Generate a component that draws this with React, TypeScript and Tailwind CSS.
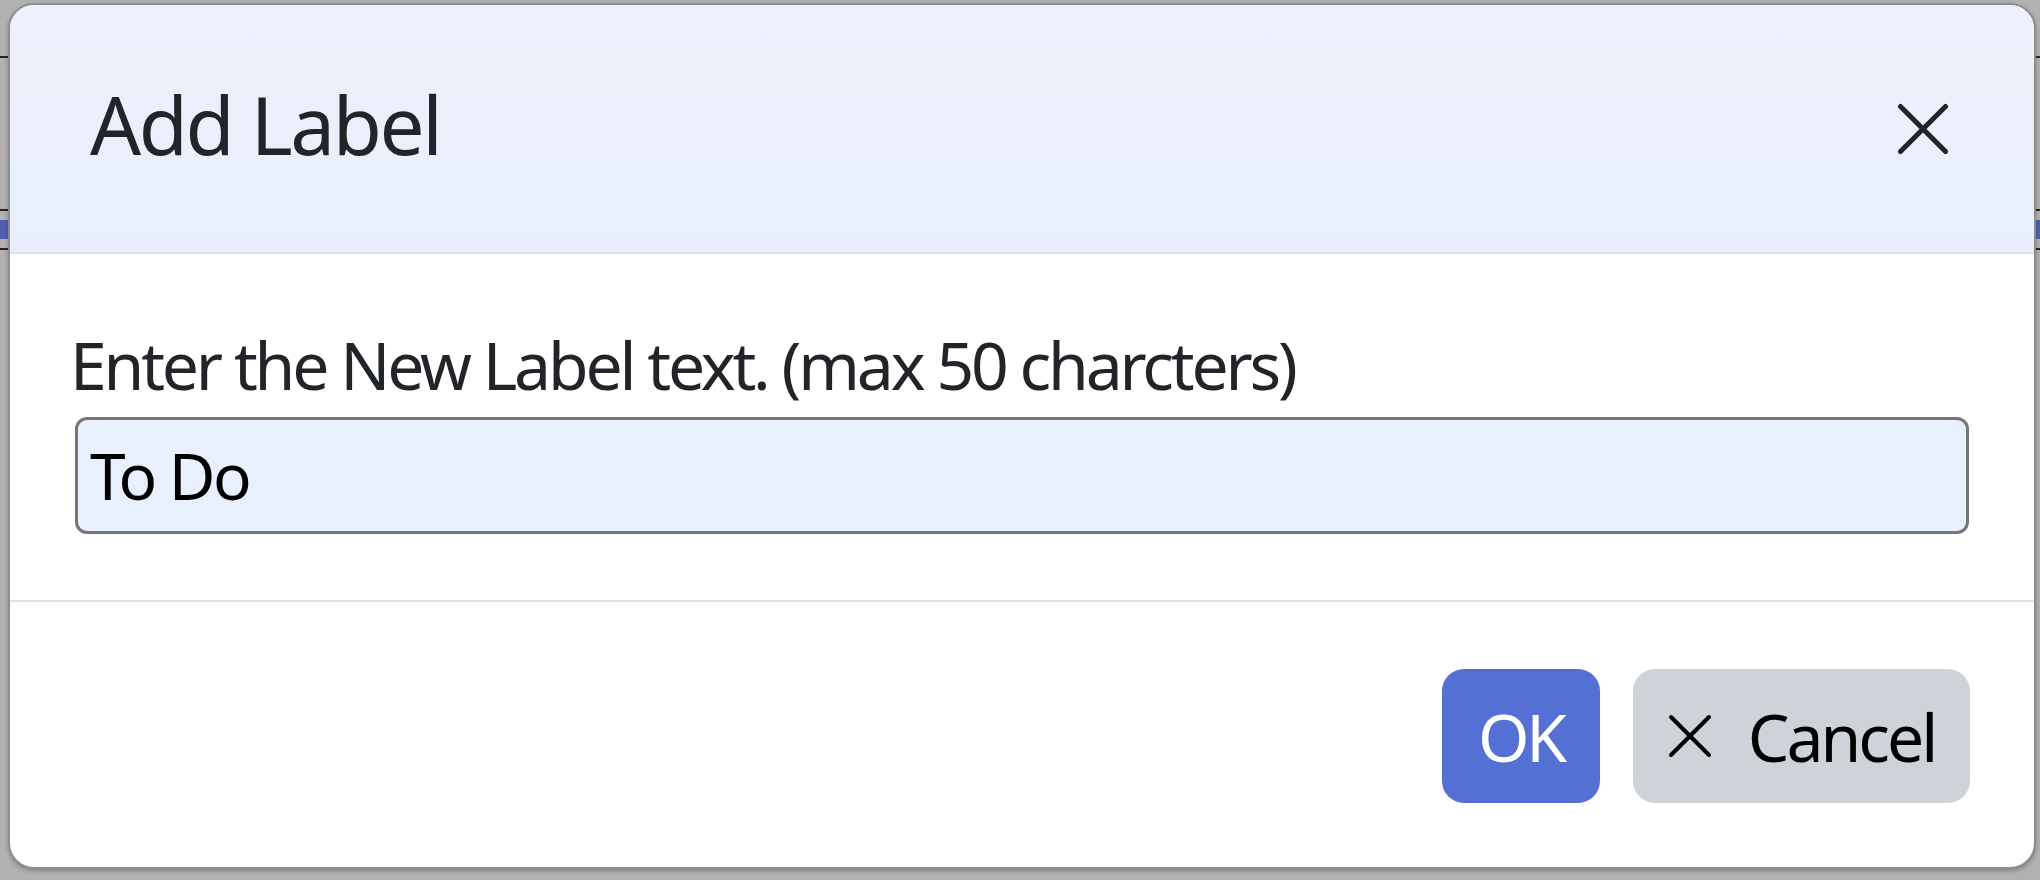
import React from "react";

const font = { fontFamily: '"Noto Sans", "Open Sans", sans-serif' };

const CloseIcon = ({ size, stroke }: { size: number; stroke: number }) => (
  <svg width={size} height={size} viewBox={`0 0 ${size} ${size}`} fill="none">
    <path
      d={`M${stroke / 2 + 1} ${stroke / 2 + 1}L${size - stroke / 2 - 1} ${size - stroke / 2 - 1}M${size - stroke / 2 - 1} ${stroke / 2 + 1}L${stroke / 2 + 1} ${size - stroke / 2 - 1}`}
      stroke="currentColor"
      strokeWidth={stroke}
      strokeLinecap="round"
    />
  </svg>
);

// page behind the modal, only the edges show
const Backdrop = () => (
  <div className="flex flex-col">
    <div className="h-[56px]" />
    <div className="h-[2px] bg-[#262626]" />
    <div className="h-[151px]" />
    <div className="h-[2px] bg-[#262626]" />
    <div className="h-[9px]" />
    <div className="h-[19px] bg-[#4f5fae]" />
    <div className="h-[9px]" />
    <div className="h-[2px] bg-[#262626]" />
  </div>
);

const AddLabelDialog = () => {
  return (
    <div className="absolute left-[8px] top-[3px] w-[2028px] h-[866px] rounded-[26px] border-2 border-[#8d8d8d] bg-white overflow-hidden shadow-[0_2px_4px_rgba(0,0,0,0.25)]">
      <div className="h-[247px] flex items-center justify-between pl-[80px] pr-[85px] bg-gradient-to-b from-[#edf1fc] to-[#e8eefb] border-b-2 border-[#dee2e6] box-content">
        <h5 className="text-[80px] leading-[120px] tracking-[-0.03em] text-[#212529] -mt-[10px]">Add Label</h5>
        <button className="text-[#212529]">
          <CloseIcon size={52} stroke={5} />
        </button>
      </div>

      <div className="pt-[61px] pb-[66px] px-[65px]">
        <label className="block text-[66px] leading-[99px] tracking-[-0.048em] text-[#212529] -ml-[5px]">
          Enter the New Label text. (max 50 charcters)
        </label>
        <div className="mt-[3px] h-[117px] flex items-center rounded-[12px] border-[3px] border-[#767676] bg-[#e8f0fe] pl-[12px]">
          <span className="text-[64px] tracking-[-0.04em] text-black">To Do</span>
        </div>
      </div>

      <div className="border-t-2 border-[#dee2e6] pt-[67px] pr-[64px] flex justify-end gap-[33px]">
        <button className="w-[158px] h-[134px] flex items-center justify-center rounded-[22px] bg-[#5570d5] text-white text-[66px] tracking-[-0.05em]">
          OK
        </button>
        <button className="w-[337px] h-[134px] flex items-center justify-center gap-[36px] rounded-[22px] bg-[#ced3da] text-black text-[66px] tracking-[-0.045em]">
          <CloseIcon size={44} stroke={4} />
          <span>Cancel</span>
        </button>
      </div>
    </div>
  );
};

export default function App() {
  return (
    <div className="relative w-[2040px] h-[880px] bg-[#b1b1b1] overflow-hidden" style={font}>
      <Backdrop />
      <AddLabelDialog />
    </div>
  );
}
